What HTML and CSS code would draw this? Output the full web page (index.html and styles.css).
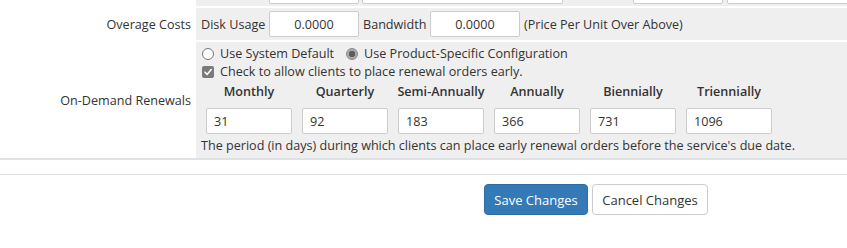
FILE: index.html
```html
<!DOCTYPE html>
<html lang="en">
<head>
<meta charset="utf-8">
<title>Product Configuration</title>
<link rel="stylesheet" href="styles.css">
</head>
<body>
<div class="page">
  <table class="form">
    <colgroup>
      <col class="col-label">
      <col class="col-field">
    </colgroup>
    <tr class="row-cut">
      <td class="label"></td>
      <td class="field">
        <div class="cut">
          <span class="box box-a"></span>
          <span class="box box-b"></span>
          <span class="box box-c"></span>
          <span class="box box-d"></span>
        </div>
      </td>
    </tr>
    <tr class="row-overage">
      <td class="label">Overage Costs</td>
      <td class="field">
        <div class="inline">
          <span class="lbl-disk">Disk Usage</span>
          <input class="num" type="text" value="0.0000">
          <span class="lbl-bw">Bandwidth</span>
          <input class="num" type="text" value="0.0000">
          <span>(Price Per Unit Over Above)</span>
        </div>
      </td>
    </tr>
    <tr class="row-renew">
      <td class="label">On-Demand Renewals</td>
      <td class="field">
        <div class="line">
          <span class="radio"></span><span class="opt">Use System Default</span>
          <span class="radio checked"></span><span>Use Product-Specific Configuration</span>
        </div>
        <div class="line">
          <span class="check"><svg width="12" height="12" viewBox="0 0 12 12"><path d="M3 6.2 L5.1 8.4 L9.2 3.6" fill="none" stroke="#fff" stroke-width="1.6" stroke-linecap="round" stroke-linejoin="round"/></svg></span><span>Check to allow clients to place renewal orders early.</span>
        </div>
        <div class="periods">
          <div class="period"><div class="ph">Monthly</div><input class="days" type="text" value="31"></div>
          <div class="period"><div class="ph">Quarterly</div><input class="days" type="text" value="92"></div>
          <div class="period"><div class="ph">Semi-Annually</div><input class="days" type="text" value="183"></div>
          <div class="period"><div class="ph">Annually</div><input class="days" type="text" value="366"></div>
          <div class="period"><div class="ph">Biennially</div><input class="days" type="text" value="731"></div>
          <div class="period"><div class="ph">Triennially</div><input class="days" type="text" value="1096"></div>
        </div>
        <div class="help">The period (in days) during which clients can place early renewal orders before the service's due date.</div>
      </td>
    </tr>
  </table>
  <div class="rule"></div>
  <div class="actions">
    <button class="btn btn-primary" type="button">Save Changes</button>
    <button class="btn btn-default" type="button">Cancel Changes</button>
  </div>
</div>
</body>
</html>
```

FILE: styles.css
```css
html, body {
  margin: 0;
  padding: 0;
  background: #fff;
}
body {
  font-family: "Open Sans", "Liberation Sans", sans-serif;
  font-size: 12.6px;
  color: #333;
  width: 847px;
  height: 248px;
  overflow: hidden;
}
.page {
  width: 847px;
}
.form {
  width: 847px;
  table-layout: fixed;
  border-collapse: collapse;
  border-spacing: 0;
}
.col-label {
  width: 196px;
}
.form td {
  padding: 0;
}
.form tr + tr td {
  border-top: 2px solid #fff;
}
.label {
  padding-right: 5px !important;
  text-align: right;
  vertical-align: middle;
  background: #fff;
  white-space: nowrap;
}
.field {
  background: #efefef;
  vertical-align: top;
}
.row-cut .field {
  height: 6px;
}
.cut {
  height: 6px;
  overflow: hidden;
  display: flex;
  align-items: flex-end;
  box-sizing: border-box;
  padding-bottom: 2px;
}
.box {
  display: block;
  height: 26px;
  flex: none;
  box-sizing: border-box;
  border: 1px solid #ccc;
  border-radius: 2px;
  background: #fff;
}
.box-a { width: 90px; margin-left: 73px; }
.box-b { width: 201px; margin-left: 3px; }
.box-c { width: 90px; margin-left: 70px; }
.box-d { width: 130px; margin-left: 4px; }

.row-overage .field {
  height: 32px;
  vertical-align: middle;
}
.inline {
  display: flex;
  align-items: center;
  padding-left: 5px;
  white-space: nowrap;
}
.lbl-disk {
  width: 68px;
}
.lbl-bw {
  width: 67px;
  padding-left: 4px;
}
.inline input + span:last-child {
  padding-left: 4px;
}
input.num, input.days {
  font-family: "Open Sans", "Liberation Sans", sans-serif;
  font-size: 12.6px;
  color: #333;
  box-sizing: border-box;
  height: 26px;
  border: 1px solid #ccc;
  border-radius: 2px;
  background: #fff;
  margin: 0;
  outline: none;
}
input.num {
  width: 90px;
  text-align: center;
  padding: 0 4px;
}
.row-renew .field {
  height: 117px;
  padding: 3px 5px 3px 5px;
  box-sizing: border-box;
}
.line {
  display: flex;
  align-items: center;
  height: 18px;
  line-height: 18px;
  white-space: nowrap;
}
.radio {
  display: inline-block;
  width: 12px;
  height: 12px;
  box-sizing: border-box;
  border: 1px solid #777;
  border-radius: 50%;
  background: #fff;
  margin: 0 6px 0 1px;
  flex: none;
}
.radio.checked {
  border-color: #8d8d8d;
  background: radial-gradient(circle, #5e5e5e 0, #5e5e5e 3px, #a9a9a9 3.5px);
}
.opt {
  margin-right: 11px;
}
.check {
  display: inline-block;
  width: 12px;
  height: 12px;
  border-radius: 2px;
  background: #7a7a7a;
  margin: 0 6px 0 1px;
  flex: none;
}
.check svg {
  display: block;
}
.periods {
  display: flex;
  gap: 10px;
  padding-left: 5px;
  margin-top: 2px;
}
.period {
  width: 86px;
  display: flex;
  flex-direction: column;
  align-items: center;
}
.ph {
  font-weight: 600;
  height: 18px;
  line-height: 18px;
  margin-bottom: 7px;
  white-space: nowrap;
}
input.days {
  width: 86px;
  padding: 0 7px;
}
.help {
  margin-top: 3px;
  line-height: 18px;
  white-space: nowrap;
}
.rule {
  height: 2px;
  background: #dfe2e5;
}
.actions {
  border-top: 1px solid #dcdcdc;
  margin-top: 14px;
  padding-top: 9px;
  padding-left: 484px;
  display: flex;
  gap: 4px;
}
.btn {
  font-family: "Open Sans", "Liberation Sans", sans-serif;
  font-size: 13px;
  height: 31px;
  box-sizing: border-box;
  border-radius: 4px;
  padding: 0;
  white-space: nowrap;
  cursor: pointer;
}
.btn-primary {
  background: #337ab7;
  border: 1px solid #2e6da4;
  color: #fff;
  width: 104px;
}
.btn-default {
  background: #fff;
  border: 1px solid #ccc;
  color: #333;
  width: 116px;
}
```
